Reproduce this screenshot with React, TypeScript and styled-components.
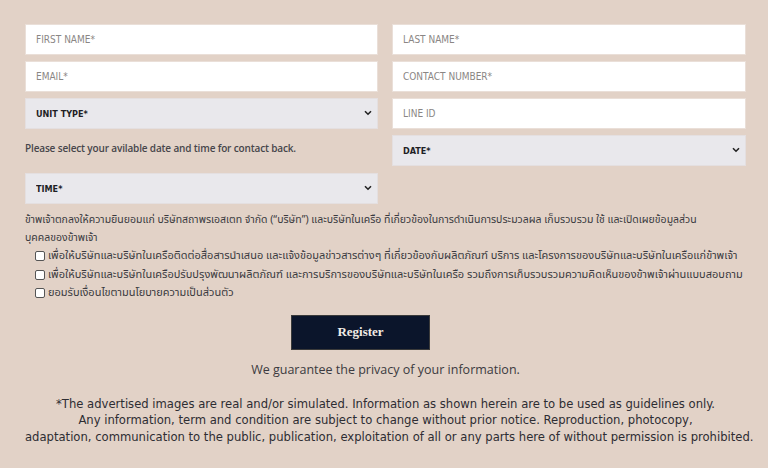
import React from "react";
import styled, { createGlobalStyle } from "styled-components";

const Global = createGlobalStyle`
  html, body { margin: 0; padding: 0; background: #e2d2c7; }
  body { font-family: "Open Sans", "Noto Sans", sans-serif; }
  * { box-sizing: border-box; }
`;

const Page = styled.div`
  width: 768px;
  min-height: 468px;
  background: #e2d2c7;
  padding: 24px 22px 0 25px;
`;

const Grid = styled.div`
  display: grid;
  grid-template-columns: 353px 354px;
  column-gap: 14px;
  align-items: start;
`;

const Column = styled.div`
  display: flex;
  flex-direction: column;
  gap: 6px;
`;

const TextInput = styled.input`
  height: 31px;
  width: 100%;
  background: #ffffff;
  border: 1px solid #eadfd8;
  padding: 0 10px;
  font-family: "DejaVu Sans", sans-serif;
  font-stretch: condensed;
  font-size: 10px;
  color: #333;
  outline: none;
  &::placeholder {
    color: #8a8684;
    text-transform: uppercase;
  }
`;

const SelectWrap = styled.div`
  position: relative;
  height: 31px;
`;

const Select = styled.select`
  appearance: none;
  height: 31px;
  width: 100%;
  background: #e9e8ec;
  border: 1px solid #e4dfe0;
  border-radius: 0;
  padding: 0 10px;
  font-family: "DejaVu Sans", sans-serif;
  font-stretch: condensed;
  font-size: 9px;
  font-weight: 700;
  color: #1f1f25;
  outline: none;
`;

const Chevron = styled.svg`
  position: absolute;
  right: 6px;
  top: 12px;
  pointer-events: none;
`;

const Note = styled.div`
  height: 32px;
  padding-top: 6px;
  font-family: "Open Sans", sans-serif;
  font-size: 10px;
  font-weight: 600;
  color: #47464b;
  letter-spacing: -0.15px;
`;

const Consent = styled.div`
  margin-top: 7px;
  font-family: "Noto Sans Thai", "Noto Sans", "DejaVu Sans", sans-serif;
  font-size: 10.5px;
  line-height: 18px;
  color: #3a3a40;
  white-space: nowrap;
`;

const CheckList = styled.div`
  display: flex;
  flex-direction: column;
  padding-left: 10px;
`;

const CheckRow = styled.label`
  display: flex;
  align-items: center;
  gap: 3px;
  height: 18.5px;
  font-size: 11px;
`;

const Box = styled.input`
  appearance: none;
  margin: 0;
  width: 10px;
  height: 10px;
  border: 1px solid #555;
  border-radius: 2px;
  background: #fff;
  flex: none;
`;

const ButtonRow = styled.div`
  display: flex;
  justify-content: center;
  padding-right: 50px;
  margin-top: 12px;
`;

const Button = styled.button`
  width: 139px;
  height: 35px;
  background: #0b152b;
  border: 1px solid #3a3a3a;
  color: #f1ece6;
  font-family: "Liberation Serif", serif;
  font-weight: 700;
  font-size: 13px;
  cursor: pointer;
`;

const Privacy = styled.p`
  margin: 11px 0 0;
  text-align: center;
  font-family: "Open Sans", sans-serif;
  font-size: 12.5px;
  color: #3b3a40;
`;

const Disclaimer = styled.p`
  margin: 18px 0 0;
  text-align: center;
  font-family: "DejaVu Sans", sans-serif;
  font-stretch: condensed;
  font-size: 12.9px;
  line-height: 16.5px;
  color: #2e2d33;
  white-space: nowrap;
`;

const Field = ({ label }: { label: string }) => <TextInput placeholder={label} />;

const Dropdown = ({ label }: { label: string }) => (
  <SelectWrap>
    <Select defaultValue="">
      <option value="">{label}</option>
    </Select>
    <Chevron width="8" height="6" viewBox="0 0 8 6">
      <path d="M1 1.2 L4 4.2 L7 1.2" fill="none" stroke="#222" strokeWidth="1.6" />
    </Chevron>
  </SelectWrap>
);

const checks = [
  "เพื่อให้บริษัทและบริษัทในเครือติดต่อสื่อสารนำเสนอ และแจ้งข้อมูลข่าวสารต่างๆ ที่เกี่ยวข้องกับผลิตภัณฑ์ บริการ และโครงการของบริษัทและบริษัทในเครือแก่ข้าพเจ้า",
  "เพื่อให้บริษัทและบริษัทในเครือปรับปรุงพัฒนาผลิตภัณฑ์ และการบริการของบริษัทและบริษัทในเครือ รวมถึงการเก็บรวบรวมความคิดเห็นของข้าพเจ้าผ่านแบบสอบถาม",
  "ยอมรับเงื่อนไขตามนโยบายความเป็นส่วนตัว",
];

export default function App() {
  return (
    <Page>
      <Global />
      <Grid>
        <Column>
          <Field label="First Name*" />
          <Field label="Email*" />
          <Dropdown label="UNIT TYPE*" />
          <Note>Please select your avilable date and time for contact back.</Note>
          <Dropdown label="TIME*" />
        </Column>
        <Column>
          <Field label="Last Name*" />
          <Field label="Contact Number*" />
          <Field label="Line ID" />
          <Dropdown label="DATE*" />
        </Column>
      </Grid>
      <Consent>
        ข้าพเจ้าตกลงให้ความยินยอมแก่ บริษัทสถาพรเอสเตท จำกัด (“บริษัท”) และบริษัทในเครือ ที่เกี่ยวข้องในการดำเนินการประมวลผล เก็บรวบรวม ใช้ และเปิดเผยข้อมูลส่วน
        <br />
        บุคคลของข้าพเจ้า
        <CheckList>
          {checks.map((c) => (
            <CheckRow key={c}>
              <Box type="checkbox" />
              <span>{c}</span>
            </CheckRow>
          ))}
        </CheckList>
      </Consent>
      <ButtonRow>
        <Button type="button">Register</Button>
      </ButtonRow>
      <Privacy>We guarantee the privacy of your information.</Privacy>
      <Disclaimer>
        *The advertised images are real and/or simulated. Information as shown herein are to be used as guidelines only.
        <br />
        Any information, term and condition are subject to change without prior notice. Reproduction, photocopy,
        <br />
        adaptation, communication to the public, publication, exploitation of all or any parts here of without permission is prohibited.
      </Disclaimer>
    </Page>
  );
}
